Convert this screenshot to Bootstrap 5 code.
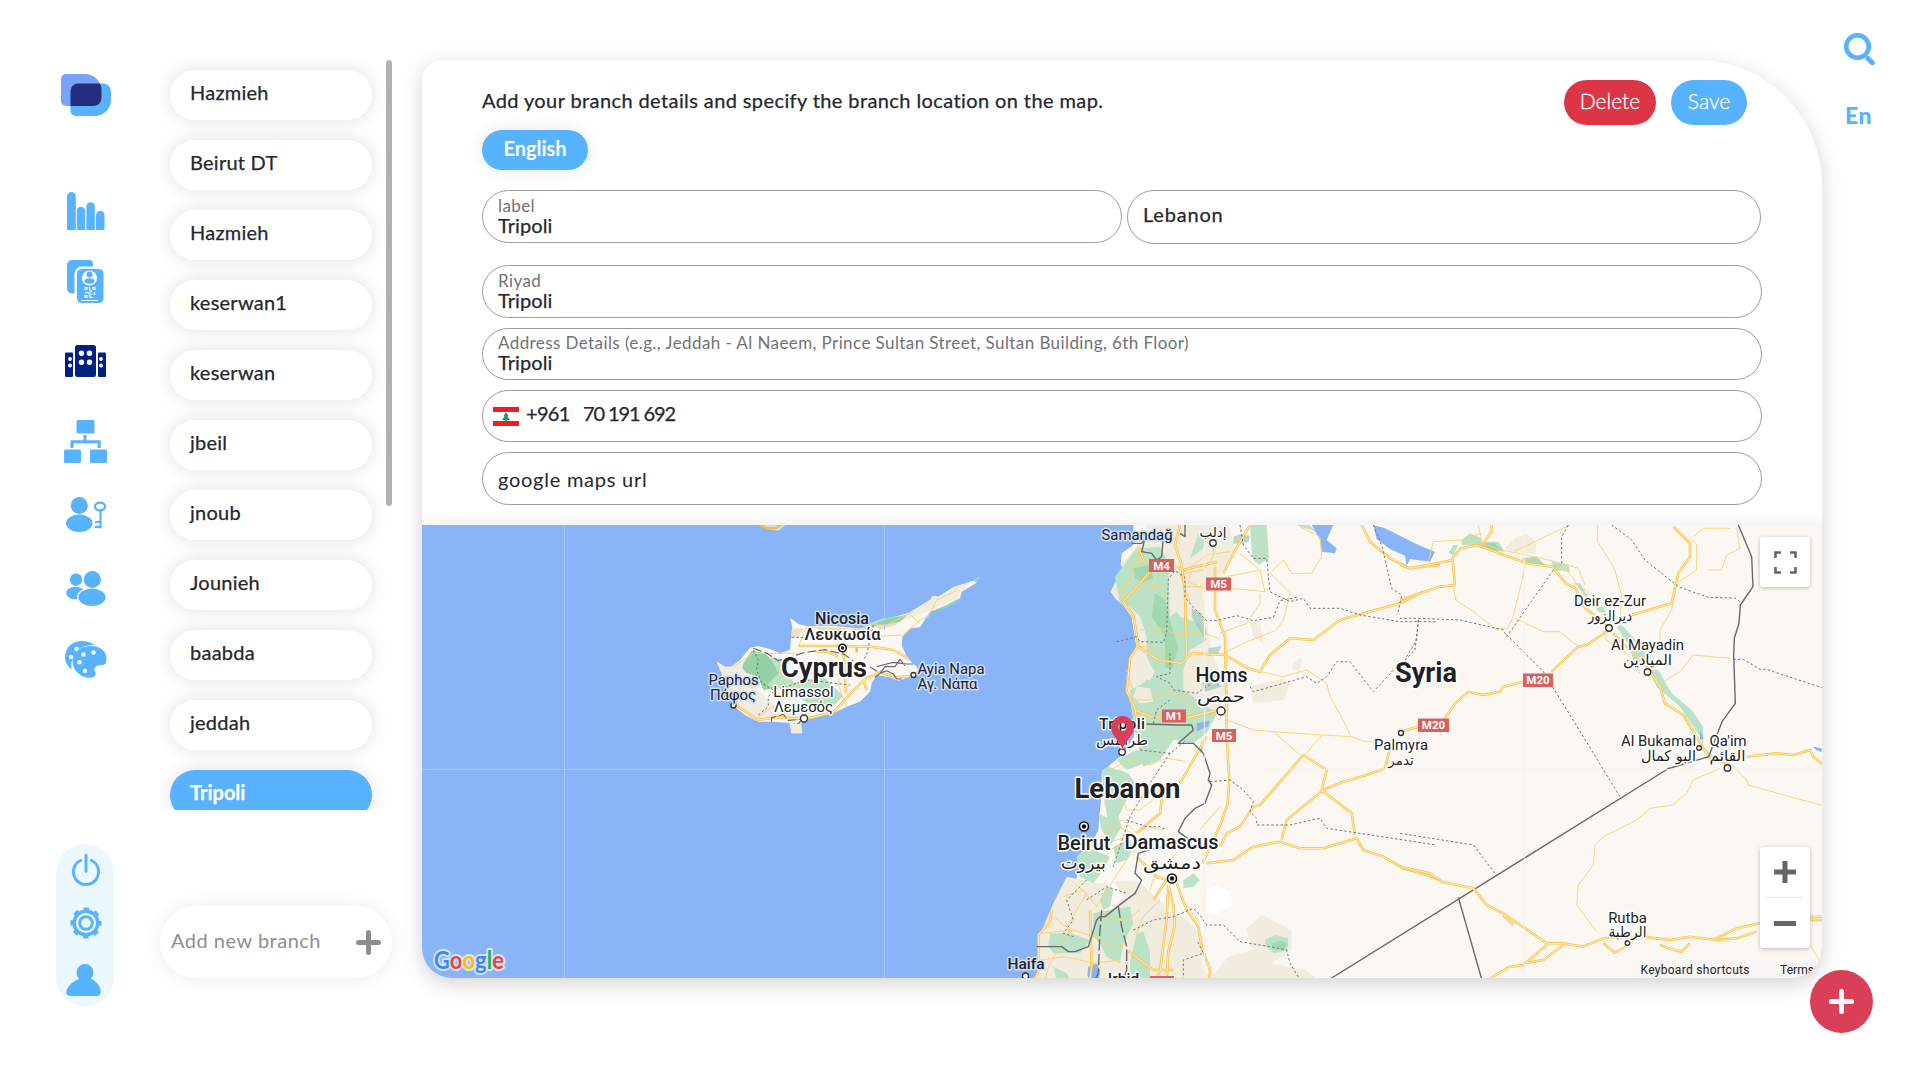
<!DOCTYPE html>
<html lang="en">
<head>
<meta charset="utf-8">
<meta name="viewport" content="width=device-width, initial-scale=1">
<title>Branches</title>
<link href="https://cdn.jsdelivr.net/npm/bootstrap@5.3.0/dist/css/bootstrap.min.css" rel="stylesheet">
<style>
:root{--sky:#57b3ff;--ink:#25282c}
body{font-family:Lato,"Open Sans",sans-serif;font-size:20px;line-height:24px;color:var(--ink);background:#fefefe;width:1920px;height:1080px;overflow:hidden}
.med{-webkit-text-stroke:.25px currentColor}
.side-nav{width:58px;margin-left:56px;padding-top:74px;height:1006px}
.side-nav svg,.tool-rail svg{display:block}
.side-nav>svg{position:relative;left:.5px}
.side-nav .ico{fill:var(--sky)}
.quick-pill{background:#ecf8ff;border-radius:29px;height:162px;width:58px}
.branch-col{width:232px;margin-left:46px;padding-top:60px;height:978px}
.branch-scroll{height:750px;overflow:hidden}
.branch-list{width:226px;padding:10px 14px 0 10px;height:750px;overflow:hidden}
.branch-item{display:block;height:50px;border-radius:25px;background:#fff;margin-bottom:20px;padding:10px 20px;box-shadow:0 0 18px rgba(0,0,0,.11);color:var(--ink);text-decoration:none;letter-spacing:.25px}
.branch-item.active{background:var(--sky);color:#fff;font-weight:700;letter-spacing:0}
.scroll-thumb{width:6px;height:446px;border-radius:3px;background:#b1b1b1}
.add-branch{height:72px;border-radius:36px;background:#fff;box-shadow:0 0 18px rgba(0,0,0,.07);color:#8f8f8f;padding:0 11px}
.branch-card{width:1400px;height:918px;margin:60px 0 0 30px;border-radius:20px 125px 30px 30px;background:#fff;box-shadow:0 6px 20px rgba(0,0,0,.17);overflow:hidden;border:0}
.card-form{height:465px;padding:20px 60px 0}
.intro{padding-top:8px;letter-spacing:.4px}
.pill-btn{height:45px;border-radius:22.5px;border:0;color:#fff;font-size:21px;line-height:24px;padding:0 10px 4px;font-weight:300;-webkit-text-stroke:.3px currentColor}
.lang-tab{width:106px;height:40px;border-radius:20px;background:var(--sky);color:#fff;font-weight:700;box-shadow:0 0 18px rgba(0,0,0,.1);padding-bottom:5px}
.field{border:1px solid #9c9c9c;border-radius:27px;background:#fff;padding:5px 15px 0;height:53px}
.field label{display:block;font-size:17px;line-height:20px;color:#707376;font-weight:400;letter-spacing:.41px}
.field input{display:block;width:100%;border:0;padding:0;background:transparent;outline:0;color:var(--ink);line-height:22px;height:22px;margin-top:-2px;letter-spacing:.1px}
.map-area{height:453px;box-shadow:0 0 18px rgba(0,0,0,.09)}
.map-ctl{position:absolute;right:12px;width:50px;background:#fff;border-radius:3px;box-shadow:0 1px 4px rgba(0,0,0,.25)}
.tool-rail{margin-left:21px;padding-top:32px;width:60px}
.lang-code{margin:37px 0 0 2px;color:var(--sky);font-weight:900;font-size:23px;letter-spacing:.4px}
.fab{position:absolute;left:1810px;top:970px;width:63px;height:63px;border-radius:50%;background:#d93f57;border:0}
.map-area text{font-family:Roboto,"DejaVu Sans",sans-serif;fill:#202124;stroke:#fff;stroke-width:3px;paint-order:stroke;stroke-linejoin:round;text-anchor:middle}
.map-area .t-sm{font-size:14.9px}.map-area .t-md{font-size:17px;font-weight:500}.map-area .t-cap{font-size:19.5px;font-weight:500}.map-area .t-lg{font-size:28px;font-weight:700}
.map-area .ar{font-family:"DejaVu Sans",sans-serif;font-weight:400}
.map-area .sea{stroke:#cfe0fb}
.map-area .shield{font-size:11.5px;font-weight:700;fill:#fff;stroke:none}
.map-area .note{font-size:12px;stroke:none;fill:#222}
.map-area .glogo{font-family:Lato,sans-serif;font-size:24px;font-weight:700;stroke:#d5e4fc;stroke-width:4px;text-anchor:start}
.rd{fill:none;stroke:#fcd170;stroke-width:2.8;stroke-linejoin:round}
.hw-o{fill:none;stroke:#f9bd40;stroke-width:7.6;stroke-linejoin:round}
.hw-i{fill:none;stroke:#fee9ae;stroke-width:3.4;stroke-linejoin:round}
.adm{fill:none;stroke:#6e7276;stroke-width:3;stroke-dasharray:7 7}
.bdr{fill:none;stroke:#666a6e;stroke-width:4.2;stroke-linejoin:round}
.g1{fill:#bbe2c6}.g2{fill:#94d2a5}.sand{fill:#f2ecdf}.lake{fill:#8ab4f8}
.town{fill:#fff;stroke:#33363a;stroke-width:1.4}
</style>
<script src="https://cdn.jsdelivr.net/npm/bootstrap@5.3.0/dist/js/bootstrap.bundle.min.js"></script>
</head>
<body class="position-relative">
<div class="d-flex align-items-start">

<nav class="side-nav d-flex flex-column align-items-center flex-shrink-0">
  <svg width="50" height="42" viewBox="0 0 50 42"><path d="M5 0h19a16.500 16.500 0 0 1 16.500 16.500V27a5 5 0 0 1-5 5H5a5 5 0 0 1-5-5V5a5 5 0 0 1 5-5z" fill="#79a2fd"/><path d="M17 9.500h25a8 8 0 0 1 8 8V26a16 16 0 0 1-16 16H14.500a5 5 0 0 1-5-5V17a7.500 7.500 0 0 1 7.500-7.500z" fill="#57b3ff"/><path d="M17 9.500h22q1.500 3 1.500 7V24a8 8 0 0 1-8 8h-23V17a7.500 7.500 0 0 1 7.500-7.500z" fill="#262b7e"/></svg>
  <svg class="ico" style="margin-top:76px" width="38" height="38" viewBox="0 0 38 38"><path d="M0 38V4.500a4.400 4.400 0 0 1 8.800 0V38zM9.800 38V19a4.200 4.200 0 0 1 8.400 0v19zM19.400 38V14.500a4.200 4.200 0 0 1 8.400 0V38zM29 38V23a4.200 4.200 0 0 1 8.500 0v15z"/></svg>
  <svg class="ico" style="margin-top:30px" width="37" height="43" viewBox="0 0 37 43"><path d="M5 0h17a4 4 0 0 1 4 4v2.600H15A7.500 7.500 0 0 0 7.500 14v19.500H5a5 5 0 0 1-5-5V5a5 5 0 0 1 5-5z"/><rect x="10" y="9" width="26.500" height="34" rx="4.500"/><circle cx="22.500" cy="18" r="7.600" fill="#fff"/><circle cx="22.500" cy="14.500" r="3"/><ellipse cx="22.500" cy="21" rx="5" ry="2.700"/><path d="M18 27.500h2v2h-2zM26 27.500h2v2h-2zM18 35.500h2v2h-2zM22.500 27v3l2 1-2 1.500M18 32.500h3l1 1.500h3.500M23 35v2.500h2.500M27.500 32v3" fill="none" stroke="#fff" stroke-width="1.200"/><path d="M14 40.500h17" stroke="#fff"/></svg>
  <svg style="margin-top:42px" width="41" height="32" viewBox="0 0 41 32" fill="#00217f"><rect y="7.500" width="8" height="24.500" rx="1"/><rect x="33" y="7.500" width="8" height="24.500" rx="1"/><rect x="10" width="21" height="32" rx="2.500"/><g fill="#fff"><circle cx="16.500" cy="8.300" r="2.700"/><circle cx="24.500" cy="8.300" r="2.700"/><circle cx="16.500" cy="17.300" r="2.700"/><circle cx="24.500" cy="17.300" r="2.700"/><circle cx="5" cy="14" r="1.900"/><circle cx="5" cy="20.500" r="1.900"/><circle cx="36" cy="14" r="1.900"/><circle cx="36" cy="20.500" r="1.900"/></g></svg>
  <svg class="ico" style="margin-top:43px" width="43" height="43" viewBox="0 0 43 43"><rect x="12.500" width="18" height="13.500" rx="1.500"/><rect y="29.500" width="17" height="13.500" rx="1.500"/><rect x="26" y="29.500" width="17" height="13.500" rx="1.500"/><path d="M8 28v-6.300h27.200V28M21 15v6.500" fill="none" stroke="#57b3ff" stroke-width="3"/></svg>
  <svg class="ico" style="margin-top:34px" width="40" height="35" viewBox="0 0 40 35"><circle cx="13.300" cy="8.500" r="8.500"/><ellipse cx="13.300" cy="26.300" rx="13.300" ry="8.700"/><ellipse cx="34" cy="9.500" rx="5" ry="3.900" fill="none" stroke="#57b3ff" stroke-width="2.200"/><path d="M34.500 13.500V31.500M34.500 25H29M34.500 29.800H29" fill="none" stroke="#57b3ff" stroke-width="2.200"/></svg>
  <svg class="ico" style="margin-top:39px" width="40" height="35" viewBox="0 0 40 35"><circle cx="10" cy="8.700" r="6.200"/><ellipse cx="9.500" cy="22" rx="9.300" ry="6.300"/><ellipse cx="26" cy="26.300" rx="15" ry="10" fill="#fefefe"/><circle cx="26.300" cy="8.500" r="8.500"/><ellipse cx="26" cy="26.300" rx="13.600" ry="8.700"/></svg>
  <svg class="ico" style="margin-top:35px" width="42" height="37" viewBox="0 0 42 37"><path d="M30 4C18-4 0 0 0 17q0 6 6.500 11.500C5 14 14 3 30 4z"/><g fill="#fefefe"><circle cx="11.500" cy="8" r="2.200"/><circle cx="6" cy="16" r="2.200"/></g><path d="M26 5c10 0 15.500 6 15.500 12.500 0 5-2 6.500-4.500 6.500-6 0-9 3-7 7 2 3-1 5.800-5 5.800C15 36.800 7.500 29 7.500 20 7.500 11 16 5 26 5z"/><g fill="#fff"><circle cx="18.500" cy="13.500" r="2.200"/><circle cx="28.500" cy="11.500" r="2.200"/><circle cx="14.500" cy="21.300" r="2.200"/><circle cx="20" cy="30" r="2.200"/></g></svg>
  <div class="quick-pill mt-auto d-flex flex-column align-items-center">
    <svg style="margin-top:9px;margin-left:1px" width="30" height="34" viewBox="0 0 30 34"><path d="M9.500 7.500a12.600 12.600 0 1 0 11 0M15 2.300v16" fill="none" stroke="#57b3ff" stroke-width="3" stroke-linecap="round"/></svg>
    <svg style="margin-top:20px;margin-left:1px" width="32" height="32" viewBox="0 0 32 32"><circle cx="16" cy="16" r="11.800" fill="none" stroke="#57b3ff" stroke-width="3.400"/><circle cx="16" cy="16" r="13.300" fill="none" stroke="#57b3ff" stroke-width="4.600" stroke-dasharray="5.200 5.245" stroke-dashoffset="2.600"/><circle cx="16" cy="16" r="6.300" fill="none" stroke="#57b3ff" stroke-width="3"/></svg>
    <svg class="ico" style="margin-top:25px;margin-left:-4px" width="35" height="32" viewBox="0 0 35 32"><circle cx="19" cy="8.500" r="8.500"/><path d="M15 14h8q9 3 11.500 11.500 1 6.500-4 6.500h-27Q-1 31 .5 26 4 18 15 14z"/></svg>
  </div>
</nav>

<aside class="branch-col d-flex flex-column flex-shrink-0">
  <div class="branch-scroll d-flex justify-content-between">
    <div class="branch-list med">
      <a class="branch-item">Hazmieh</a>
      <a class="branch-item">Beirut DT</a>
      <a class="branch-item">Hazmieh</a>
      <a class="branch-item">keserwan1</a>
      <a class="branch-item">keserwan</a>
      <a class="branch-item">jbeil</a>
      <a class="branch-item">jnoub</a>
      <a class="branch-item">Jounieh</a>
      <a class="branch-item">baabda</a>
      <a class="branch-item">jeddah</a>
      <a class="branch-item active">Tripoli</a>
    </div>
    <div class="scroll-thumb"></div>
  </div>
  <div class="add-branch mt-auto d-flex align-items-center justify-content-between">
    <span style="letter-spacing:.5px;padding-bottom:5px">Add new branch</span>
    <svg width="25" height="25" viewBox="0 0 25 25"><path d="M12.500 2.500v20M2.500 12.500h20" stroke="#8f8f8f" stroke-width="5" stroke-linecap="round"/></svg>
  </div>
</aside>

<main class="branch-card card flex-shrink-0">
  <div class="card-form">
    <div class="d-flex align-items-start justify-content-between">
      <div class="med intro">Add your branch details and specify the branch location on the map.</div>
      <div class="d-flex" style="gap:15px;margin-right:15px">
        <button class="pill-btn btn btn-danger" style="width:92px">Delete</button>
        <button class="pill-btn btn" style="width:76px;background:#57b3ff">Save</button>
      </div>
    </div>
    <div class="lang-tab d-flex align-items-center justify-content-center" style="margin-top:5px">English</div>
    <div class="d-flex" style="margin-top:20px;gap:5px">
      <div class="field" style="width:640px"><label>label</label><input class="med" value="Tripoli"></div>
      <div class="field" style="width:634px;height:54px;padding-top:14px"><input class="med" style="letter-spacing:.8px" value="Lebanon"></div>
    </div>
    <div class="field" style="margin-top:21px"><label>Riyad</label><input class="med" value="Tripoli"></div>
    <div class="field" style="margin-top:10px;height:52px;padding-top:4px"><label>Address Details (e.g., Jeddah - Al Naeem, Prince Sultan Street, Sultan Building, 6th Floor)</label><input class="med" value="Tripoli"></div>
    <div class="field d-flex align-items-center" style="margin-top:10px;height:52px;padding:0 10px">
      <svg width="26" height="19" viewBox="0 0 26 19"><path fill="#fff" d="M0 0h26v19H0z"/><path fill="#ee1c25" d="M0 0h26v5H0zM0 14h26v5H0z"/><path fill="#1aa05a" d="M13 5l2.500 4h-1l2.500 4h-3.200v1.200h-1.600V13H9l2.500-4h-1z"/></svg>
      <span class="med" style="margin-left:7px;width:57px;letter-spacing:-.7px;padding-bottom:6px">+961</span><span class="med" style="letter-spacing:-1.1px;padding-bottom:6px">70 191 692</span>
    </div>
    <div class="field" style="margin-top:10px;padding-top:17px"><input style="letter-spacing:.75px" value="google maps url"></div>
  </div>

  <div class="map-area position-relative">
  <svg class="d-block" width="1400" height="453" viewBox="422 525 1400 453">
    <rect x="422" y="525" width="1400" height="453" fill="#8ab4f8"/>
    <!-- Turkish coast fragment and Cyprus -->
    <g transform="translate(690 520) scale(.33333)">
      <path d="M205 10l30 18 30 4 25-20z" fill="#cfe8cf"/><path class="hw-o" d="M210 15l25 10h20l20-12"/>
      <path fill="#fbf8f3" d="M300 293l25 19 25 6h80l90 8 60-26 75-20 65-40 8-12 17 2 45-28 60-20 18-12-8 18-45 27-5 20-40 27-50 13-30 47-30 3-23 25-2 25 17 40 28 25 10 25-30 5-35 12-25-10-40-7-15 25-5 25-30 30-35 13-45 22-85 12-15 23 7 25h-32l-7-32-53-3h-40l-40-20-35-27-12-28-18-40-5-30-15-35 25 15h20l25-20 30-37 25-5 35 9 30 13 30-10 3-35 4-35z"/>
      <path class="sand" d="M80 425l25 15h20l25-20 25 50 30 40 50 50 120 10-20 20-150 12-40-20-35-27-20-60zM300 608l33 0 4 32h-32zM580 300l75-20 65-40 8-12 17 2 45-28 60-20-40 35-10 20-90 38-80 30-60 10z"/>
      <path class="g2" d="M160 430l25-38 40 8 30 30 20 40-20 35-35 5-15-40-35-10-13-15zM850 182l18-12-8 18zM720 275l50-20 40-22-5 8-40 24z"/>
      <path class="g1" d="M240 410l30 8 40 70 90-20 60 60-30 30-80-10-60-40-60-10 35-40zM540 310l40-15 70-10-30 25-80 15-40 5zM380 325h60l30 20-60 2z"/>
      <path class="g2" d="M590 295l60-8-20 18-40 8-50 5z"/>
      <path fill="#eedfca" d="M306 325h36l-20 30h-18zM560 320l60-12v8l-55 14z"/>
      <path class="rd" d="M325 380l25-60 90 5 110 5M540 350l100-5 50-45 25-10 25-50 60-28M655 280l35 30M285 490l60 0 60-30 45 5M300 480v60M130 440l60-40 130 0M540 315l50 0 80-40M470 560l-25-65 5-20M205 590l100-70"/>
      <path id="cyhw" class="hw-o" d="M130 550l75 50 50-8 90 5 85-20 55-60 40-40 45-20 50 15 60-5M325 378h130l90 2 65 10 45 25M460 385l8 135M380 395l30 0 35 15M520 480l10 30M500 380v18"/><path class="hw-i" d="M130 550l75 50 50-8 90 5 85-20 55-60 40-40 45-20 50 15 60-5M325 378h130l90 2 65 10 45 25M460 385l8 135M380 395l30 0 35 15M520 480l10 30"/>
      <path class="adm" d="M190 390l15 30-5 30 15 40 35 20 40-10 60-20 130 15M305 352h60M550 315l-20 90-10 15M205 585l30-25 0-30 20-20"/>
      <path class="bdr" style="stroke-width:3.400" stroke-dasharray="26 9" d="M190 385l40 15 35 22 80-25 60-8 60 15 25 20M245 605v-12l20-5 15-5 15 18 40-3-8 12h-15M540 440l30 20-15 12"/>
      <path class="bdr" style="stroke-width:3.400" d="M560 440l30-8 20-5 40 5 20 0M570 460l15-20 30 0 15-22 15 20M570 460l20-8 20 10 10 15 15 0"/>
    </g>
    <!-- Levant coast and inland plateau -->
    <g transform="translate(1020 520) scale(.33333)">
      <path fill="#fbf8f3" d="M340 10v65l-35 25-3 35 13 15-30 40-13 25 18 25 20 15 25 35 10 60 5 35-20 25-10 60 2 45 13 45 10 40-3 50-35 55-32 25-30 30v60l-5 50-5 60-20 40-20 15-10 35-20 70-20 40-20 30-25 50-10 50-35 45v55l-5 60-45-4-25 30H2410V10z"/>
      <path class="sand" d="M350 80l-48 55 13 15-30 40-13 25 38 40 25 35 15 95-20 25-10 60 15 90 160 20 120 10 20-60-60-130-30-200 60-40 40-80-20-65H380zM250 870l30-60 40-80-60 45zM100 1150l40-80 90 20 120-10 80 70 30 100 80 40 20 120H0v-20l50-20 5-115zM680 1225l45-40 90 45 0 60-60 40 100 20 40 30 0 30h-350l80-100 70-20zM440 1180l50 10 60 60-10 90 40 40h-200zM690 500l100-25 20 15-20 50-90 10zM690 310l30-10 10 70-30-20zM820 430l25-20-5 45-25-10z"/>
      <path fill="#fbf8f3" d="M400 780l30 20-80 60-50 140-30 60 40 70-60 60 20-170z"/>
      <path fill="#fff" d="M560 1110l30-15 40 20 5 40-50 30-25-10z"/>
      <path class="g1" d="M350 85l70-5 30 60 0 100 30 50 60 20 20 50-50 30-20 60 0 60 100 70-30 60-40 30-60-10-40 60-50 20-20-80-15-90-5-60 40-20 30-40-20-40 0-60-20-60-30-30-30-10-15-80zM515 100l20-60h35l-25 50-35 25zM690 15h50l7 100-30 20-20-20zM828 15h40l20 20zM245 750l20-10 60 20 40 60-40 10-40 80-20 0-10-60zM290 720l60-30 60 10-10 20-80 30zM350 640h100l-20 60-60-10zM235 880l40 20 20-10 10 30-30 50-30-40zM170 1010l30-30 70 30-20 40-30 40-40-20zM280 980l40-20 20 20-20 40-30 10zM220 1180l50-10 60-10 10 50-30 60-10 60-40-20-20-40-20-20zM90 1240l60 0 60 20-30 40-80 0-15-20zM350 1240l20-5 20 60 0 90-60 10 0-70zM490 1080l30-20 20 20-20 20-30 5zM240 1140l20-40 20 10-10 50-20 10zM735 1260l30-15 40 10-3 35-40 10-25-20zM100 1340l40 20 10 20-40 5z"/>
      <path class="sand" d="M340 420l30-10 35 45-15 25-45-10zM350 500l40 5 10 40-40 5-20-20zM445 150l40 10 5 100-40 30z"/>
      <path class="g2" opacity=".65" d="M340 145l50-10 10 40-30 10-25-10zM405 220l30 20 20 80 20 60-20 70-20-10 0-90-40-60zM755 1270l30-8 18 10-10 18-35-2z"/>
      <path fill="#9ec9ba" opacity=".7" d="M640 50l20-8 30 5-5 20-45 5zM515 265l30 15 15 60-10 10-35-60zM565 385l40-8-10 25-30 5zM545 490l40-10 20 20-50 15z"/>
      <path class="lake" d="M875 15h65l-20 45 30 25-5 15-40-5-5-35zM1060 15l35 10 100 50 50 20-15 30-60-8-10 20-5-30-45-20-40-30zM530 610l40-8-5 15-35 18zM545 660l-5 40 8-10zM205 1340l25-10 10 20-3 45h-20l-15-30zM585 490l10 0 0 8z"/>
      <path class="rd" d="M360 90l-60 150M340 130l60-10 50 20 30 20M350 170l60 30 30 40M300 245l70-50 70 10M360 330l60-5 60 20 50-10 70 20M350 380l50 0 40 20M330 540l60 0 50-30 60 20 20 50M340 510l-20-60M580 70l0 40-30 40-60 10M630 95l-70 10-80 60 30 80M660 100l60 50 15 65-100-10-90 0-40-20 10-30M720 150l-100 20M840 20l60 30 5 60-30 50-60 0-25-40-40 40 60 60-20 80-20 30-100 40-60 30M720 220v30l-40 60-80 30M500 200l60 0M620 600l80 30 60 5 80 70M760 635l145 10 90 5 40 15h40M720 455l70 15 70-20 60 40 10 40 50 90 10 25M905 645l-50 60M270 750l60-30 60 15 50-20 60 10M260 790l40 20 20 60 40 0 50-40 10-40M250 920l60-20 40 40 30-20 50 10M230 960l60-40 50 20M200 980l60-10 60-20M180 1030l60 20 30-60 60-30 10 30-40 60M150 1080l50 40-60 100M130 1130l60-20 40 50 70-110M100 1190l50 40-60 100-20 60M60 1240l100-10 60 20M60 1320l80-10 80 20 80-10M220 1250l60 30 40-10M240 1180l80 20 40-30M350 1240l20-50 50-50M420 690l30-50 60-50M540 930l60-70M440 640l-60 60M480 1130l60 80M390 1110l20-60 60-50"/>
      <g class="hw-o"><path id="lv" d="M470 140l20 10 60-15 40-10M610 160l30-60 50-85M585 140l0 130 30 80 5 240 0 60 8 130-5 70-20 60-55 120M480 15l-15 60 20 60 10 80 5 200M345 570l50 20 100 5 80-20 50-10M355 80l20 50M310 245l80-90 50-20M310 245l30 40 15 90-25 40-10 100 25 50 5 35M355 380l60 40 70 10 30-30 100 5 70 40 35 10 30-50 60-50 70 5 80-60 180-50 70-35M1025 15l25 50 60 50 60 30 90-10M560 1030l80-10 60-40 80-15 60 20h70l100-30 20 35 60 20 60 35 70 20 40 15M600 980l20-40 40-20 40-60 20-5 130-150 70 45-15 60 90 70 10 65M910 810l-110 90-15 60M910 810l60-25 70-20 55-20 15-60 M480 790l80-140M445 1095l-5 100-20 160-10 20M445 1095l15 60 5 60-20 80-5 80M470 1090l30 80 35 50 10 60 25 70-5 50M320 1290l80 60 60 0M95 1170l-5 35-35 40v110l-10 20M210 1170l5 170-5 40M350 1010l60 60 50 15M430 800l-10 80-70 60M440 1080l-40 60"/></g>
      <use href="#lv" class="hw-i"/>
      <path class="adm" d="M290 365l60-15 10 15 70 2 10-30 5-160 20-25 30 20v60l25 30 40 40 30 0 60-15 50 15 60-10 20-50 50-10M660 15l10 60 30 40 40 0 10 100 60 30 40-10 20 30 90 0 60 20 120 20h110M1060 15l25 60 30 130 30 20-10 50M1195 300l-10 90-30 30M690 500l10 15 90-25 70-20 30 20 30-20 30-45 40 0 70 90 60-65M450 400l0 60-40 10 40 20 10 20 70 10 60-40M400 610l10-40 40-30M360 690l90 10 50-40M570 785l60-5 40 30 30 35-10 30 20 20v20h100l90-20 20 30 330 50M450 700l-60 90-60 100-50 150M320 900l60 20 40 0 20 10M200 1080l-60 60 20 60-30 40 30 10M200 1140l60-40 60 20M340 1230l60-30 60-10 60-25 20 20 20 30 50 0 50 50 90 15 50 10 10 40 30 50M490 1380v-60l60-20-20-40"/>
      <path class="bdr" d="M335 70l30 0 10-15-10 40 30 5 15 20 15-10 5-60M380 612l90 3 45 0 5 15-45 40 45 0 30 30 20 60-5 20 10 15-20 55-30 15-30 30-20 40 40 30-10 15-40-10-80 20-30 10-10 60 20 20-20 40-40 30-50 40-15 0-10 10-25 80-40 15-20 0-20-15-75 0M480 40l15 10V10M935 1374L1943 747"/>
      <path class="bdr" stroke-dasharray="34 10" d="M245 1170l-5 60-5 130-15 30M295 1160l10 60 15 60 0 70-10 30"/>
      <path d="M553 15v1360" stroke="#f4f0ea" stroke-width="3"/>
    </g>
    <!-- Euphrates valley and western Iraq -->
    <g transform="translate(1400 510) scale(.33333)">
      <path fill="#f1ecdd" d="M350 80l30-8 28 25 0 35-60-5-35-10z"/>
      <path class="g1" d="M145 130l15-25h15l-15 30zM185 90l25-20 35 15v20h-60zM245 95h50l20 30-70-10zM455 155l50 10 5 20-50-5zM525 220l15 0 25 40-10 0zM585 290h25l10 20-25-5zM650 350l15-5 70 75 0 40-35-10-10-40zM745 480l30 0 40 70 60 50 35 50 0 60 30 30-20 0-20-60-60-90-70-60z"/>
      <path class="g2" d="M245 100h40l25 25-40-8zM365 145l45-5 25 25-50 0z" opacity=".8"/>
      <path class="rd" d="M235 45l10 50M100 95l85-5 60-20M85 155l15-60M245 100l60 20 120 25 80 20 30 10 20 50M340 125l170-80M593 45v50l50 80 22 80-5 70M160 230l8 40 60 40 55 45h40l15-30 30-120 10-60M345 325l85 40h50l55 45M880 80l30-25 80 0M1010 55l10 60-40 20-15 45h-40M890 180l-60 40-15 80-35 60 0 30M870 85l20 20 0 75M790 515l50-30 40-50 110 10M460 180l40 0 25 30 0 25M550 235l15 10-10 30M610 360l10 30 60 40 40 60M1000 770l40 40 5 15 160 45 60 15M960 775l-80 35-20 40-40 35-70 10-40 35-100 50-25 25-5 60-45 60-5 60 60 80M1230 1305l30 50"/>
      <g class="hw-o"><path id="ev" d="M0 270l120-40 45-5-8-80 25-30 50-10 80 30 70 25 75 10 40 50 30 15 30 60 70 60M0 165l30 10 130-25M245 105l30-40 0-20M635 355l-75 50-25 5-80 75M820 50l50 50 0 40-35 50-20 90-120 35M370 515l-60 15-10 15-50 10-45-10-40 35-40 60M0 665l55-15M640 370l100 100 40 60 15 50 55 35 60 100 20 30 60 20M1040 740l90-10 50 5 50-15 10 20 30 25M0 1070l90 20 35 25 95 20 40 50 50 25 130 90 50 0 60 10 60-25 120-5 80 10 60-10 80 10 60-5 60-20M270 1405l60-35 40-5 70-60M370 1360l60-10 60-45M610 1300l35 28 35-20M780 1305l20 8 45 12 25-25M940 1290l70-35 70-15M1180 1220h90M310 1215l30 30M1180 1230h90"/></g>
      <use href="#ev" class="hw-i"/>
      <path class="adm" d="M485 160V80l20-35M460 180l-140 200-10-20-130-30-120-5H0M320 375l110 110 230 375M635 45l60 45 40 60 100 80 90 32 80 2 20 15M1000 448h30l50 30 20 0 165 55M0 970l220 35 65 85M20 440l30-50 5-60"/>
      <path class="bdr" d="M1015 45l40 95 4 90-38 55-4 55-14 45-2 50 5 145-40 55-40 105-125 37M175 1162l70 245"/>
      <path class="lake" d="M1240 710l25 5 0 12-18-8zM900 660l10 25-10 5z"/>
      <path d="M373 45v1360M-400 778h1670" stroke="#f4f0ea" stroke-width="2.500"/>
    </g>
    <path d="M422 769.500h676M564.500 525v453M884.500 525v105M884.500 720v258" stroke="#a3c3f9"/>

    <!-- road shields -->
    <g fill="#d9605f"><rect x="1149" y="559" width="25" height="13"/><rect x="1206" y="577.500" width="25" height="13"/><rect x="1162" y="709.500" width="24" height="13"/><rect x="1212" y="729" width="24" height="13"/><rect x="1418" y="718.500" width="31" height="13.500"/><rect x="1523" y="673.500" width="30" height="13.500"/><rect x="1150" y="976" width="24" height="3"/></g>
    <text class="shield" x="1161.500" y="569.500">M4</text><text class="shield" x="1218.500" y="588">M5</text><text class="shield" x="1174" y="720">M1</text><text class="shield" x="1224" y="739.500">M5</text><text class="shield" x="1433.500" y="729">M20</text><text class="shield" x="1538" y="684">M20</text>

    <!-- town markers -->
    <g class="town"><circle cx="1213" cy="543" r="3.200"/><circle cx="1221" cy="711" r="4"/><circle cx="1122" cy="752" r="3.200"/><circle cx="1401" cy="733" r="2.500"/><circle cx="1609" cy="628" r="3.200"/><circle cx="1647.500" cy="672" r="3.200"/><circle cx="1699" cy="748" r="2.300"/><circle cx="1727.500" cy="768" r="3.200"/><circle cx="1627.500" cy="943" r="2.300"/><circle cx="733.500" cy="705.500" r="2.500"/><circle cx="804" cy="718.500" r="3.500"/><circle cx="913.500" cy="675" r="2.500"/><circle cx="1025.500" cy="976" r="3"/></g>
    <g fill="#fff" stroke="#111" stroke-width="1.600"><circle cx="842.500" cy="648" r="3.700"/><circle cx="1084" cy="826.500" r="4.500"/><circle cx="1172" cy="878.500" r="4.500"/></g>
    <g fill="#111"><circle cx="842.500" cy="648" r="1.700"/><circle cx="1084" cy="826.500" r="2.200"/><circle cx="1172" cy="878.500" r="2.200"/></g>

    <text class="t-md sea" x="842" y="624" style="font-size:16px">Nicosia</text><text class="t-md" x="842.500" y="640" style="font-size:16.500px">Λευκωσία</text>
    <text class="t-lg" x="824" y="677" textLength="86" lengthAdjust="spacingAndGlyphs">Cyprus</text>
    <text class="t-sm sea" x="733.500" y="685">Paphos</text><text class="t-sm sea" x="733" y="700">Πάφος</text>
    <text class="t-sm" x="803.500" y="697">Limassol</text><text class="t-sm" x="803.500" y="711.500">Λεμεσός</text>
    <text class="t-sm sea" x="951" y="673.500" textLength="67">Ayia Napa</text><text class="t-sm sea" x="947.500" y="689">Αγ. Νάπα</text>
    <text class="t-sm sea" x="1137" y="540" textLength="71">Samandağ</text><text class="t-sm ar" x="1213" y="537" style="font-size:13.500px">إدلب</text>
    <text class="t-cap" x="1221.500" y="682" textLength="52" lengthAdjust="spacingAndGlyphs">Homs</text><text class="t-cap ar" x="1221" y="702" style="font-size:17px" textLength="48" lengthAdjust="spacingAndGlyphs">حمص</text>
    <text class="t-md" x="1122" y="729" style="font-size:15.500px" textLength="46">Tripoli</text><text class="t-md ar" x="1122" y="745" style="font-size:15px" textLength="52" lengthAdjust="spacingAndGlyphs">طرابلس</text>
    <text class="t-lg" x="1127.500" y="798" textLength="106" lengthAdjust="spacingAndGlyphs">Lebanon</text>
    <text class="t-lg" x="1426" y="682" textLength="62" lengthAdjust="spacingAndGlyphs">Syria</text>
    <text class="t-cap" x="1084" y="850" textLength="53" lengthAdjust="spacingAndGlyphs">Beirut</text><text class="t-cap ar" x="1083.500" y="869" style="font-size:17px" textLength="45" lengthAdjust="spacingAndGlyphs">بيروت</text>
    <text class="t-cap" x="1171.500" y="849" textLength="94" lengthAdjust="spacingAndGlyphs">Damascus</text><text class="t-cap ar" x="1172" y="869" style="font-size:17px" textLength="58" lengthAdjust="spacingAndGlyphs">دمشق</text>
    <text class="t-sm" x="1401" y="750" textLength="54">Palmyra</text><text class="t-sm ar" x="1401" y="765" style="font-size:13.500px">تدمر</text>
    <text class="t-sm" x="1610" y="606" textLength="72">Deir ez-Zur</text><text class="t-sm ar" x="1610" y="621" textLength="44" lengthAdjust="spacingAndGlyphs">ديرالزور</text>
    <text class="t-sm" x="1647.500" y="650" textLength="73">Al Mayadin</text><text class="t-sm ar" x="1647.500" y="665" textLength="49" lengthAdjust="spacingAndGlyphs">الميادين</text>
    <text class="t-sm" x="1658.500" y="746" textLength="75">Al Bukamal</text><text class="t-sm ar" x="1668.500" y="760.500" textLength="55" lengthAdjust="spacingAndGlyphs">البو كمال</text>
    <text class="t-sm" x="1728" y="746">Qa'im</text><text class="t-sm ar" x="1727.500" y="760.500" textLength="36" lengthAdjust="spacingAndGlyphs">القائم</text>
    <text class="t-sm" x="1627.500" y="922.500">Rutba</text><text class="t-sm ar" x="1627.500" y="937" textLength="38" lengthAdjust="spacingAndGlyphs">الرطبة</text>
    <text class="t-md sea" x="1026" y="969" style="font-size:15.500px">Haifa</text><text class="t-md" x="1123.500" y="984" style="font-size:15.500px">Irbid</text>

    <path fill-rule="evenodd" d="M1122.500 749.500c-2-8-11.500-14-11.500-22a11.500 11.500 0 0 1 23 0c0 8-9.500 14-11.500 22zM1122.500 723a4 4 0 0 0 0 8 4 4 0 0 0 0-8z" fill="#d93f57"/>
    <text class="glogo" x="434" y="969" textLength="70" lengthAdjust="spacingAndGlyphs"><tspan fill="#4285f4">G</tspan><tspan fill="#ea4335">o</tspan><tspan fill="#fbbc05">o</tspan><tspan fill="#4285f4">g</tspan><tspan fill="#34a853">l</tspan><tspan fill="#ea4335">e</tspan></text>
    <path d="M1635 961h187v17h-187z" fill="#f5f5f5" opacity=".75"/>
    <text class="note" x="1695" y="974" textLength="109">Keyboard shortcuts</text><text class="note" x="1797" y="974" textLength="34">Terms</text>
  </svg>
  <div class="map-ctl" style="top:12px;height:50px"><svg class="d-block m-auto" width="50" height="50" viewBox="0 0 50 50"><path d="M15.500 21v-5.500H21M30 15.500h5.500V21M35.500 30v5.500H30M21 35.500h-5.500V30" fill="none" stroke="#666" stroke-width="2.600"/></svg></div>
  <div class="map-ctl" style="top:322px;height:101px"><svg class="d-block" width="50" height="101" viewBox="0 0 50 101"><path d="M25 14v22M14 25h22M14 76.500h22" stroke="#666" stroke-width="5"/><path d="M6 50.500h37" stroke="#e6e6e6"/></svg></div>
  </div>
</main>

<div class="tool-rail d-flex flex-column">
  <svg width="34" height="34" viewBox="0 0 34 34"><circle cx="14.500" cy="14.500" r="11.300" fill="none" stroke="#57b3ff" stroke-width="4.600"/><path d="M25 26.500l4.300 4.300" stroke="#57b3ff" stroke-width="5" stroke-linecap="round"/></svg>
  <div class="lang-code">En</div>
</div>
</div>
<button class="fab d-flex align-items-center justify-content-center p-0"><svg width="25" height="25" viewBox="0 0 25 25"><path d="M12.500 2.500v20M2.500 12.500h20" stroke="#fff" stroke-width="5" stroke-linecap="round"/></svg></button>
</body>
</html>
